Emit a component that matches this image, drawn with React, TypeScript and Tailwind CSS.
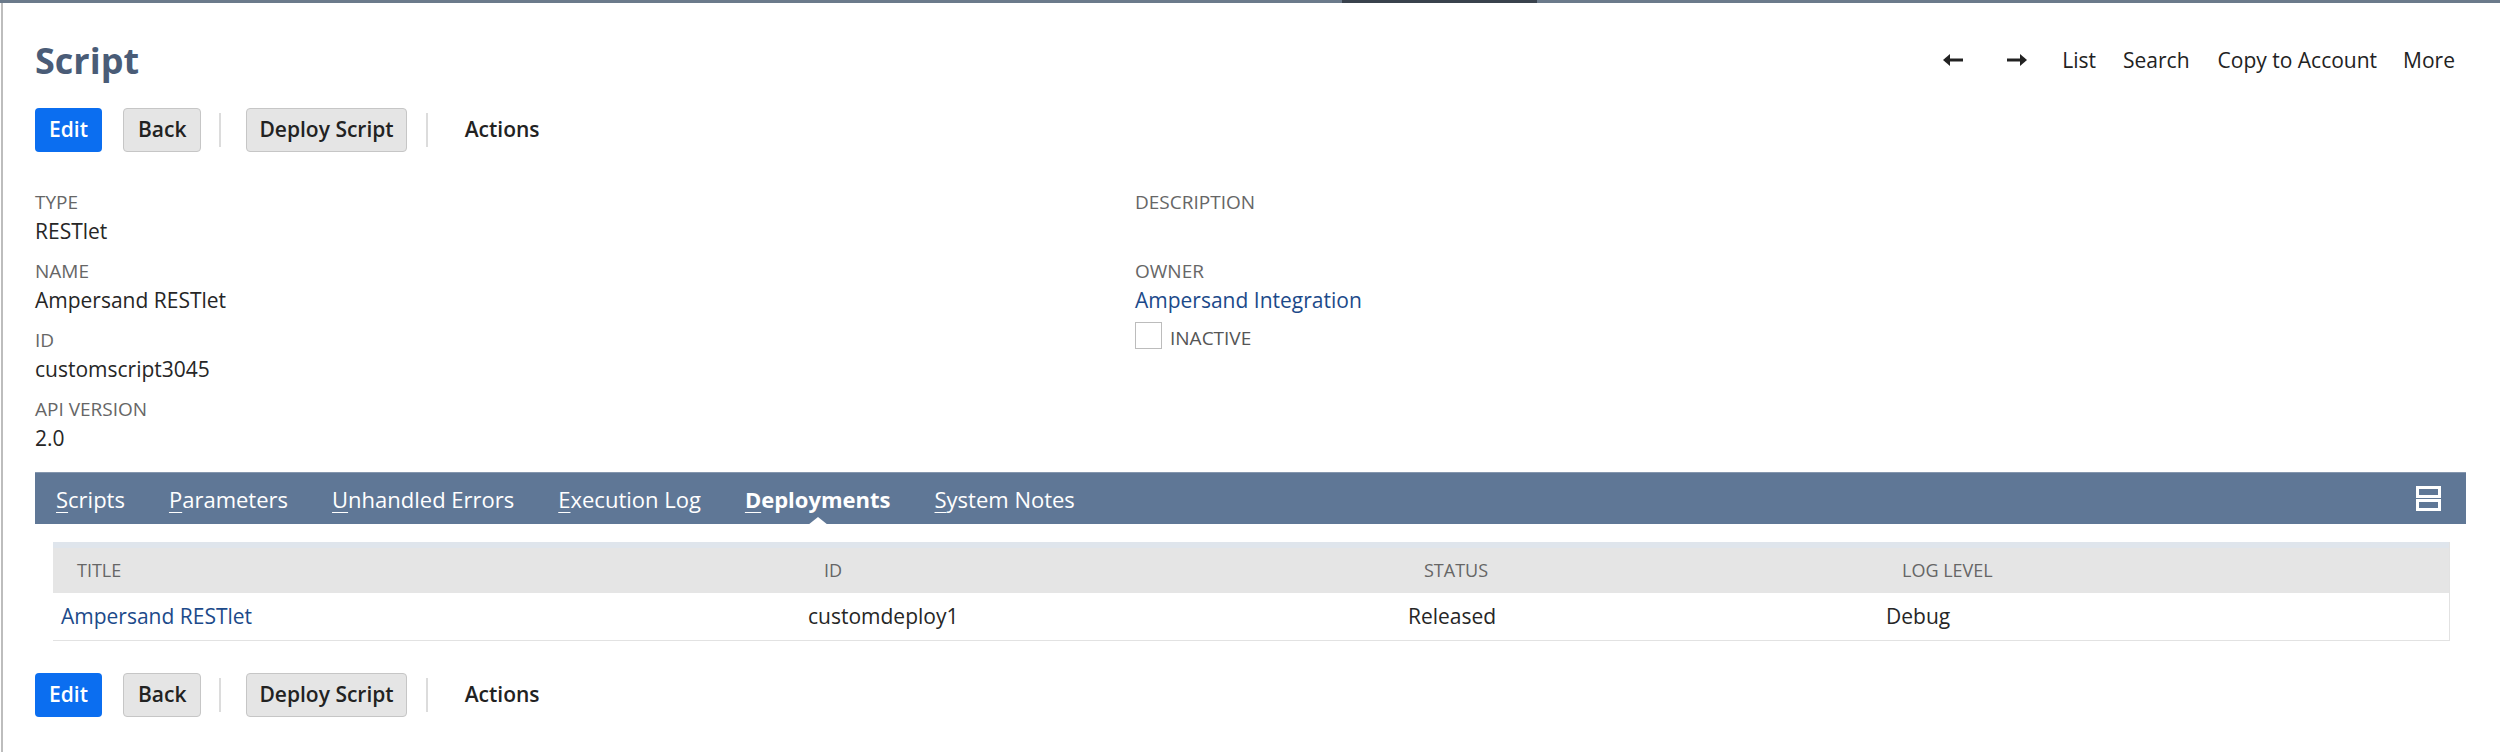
import React from "react"

const font = { fontFamily: '"Open Sans", "Liberation Sans", sans-serif' }

function ArrowLeft() {
  return (
    <svg width="23" height="16" viewBox="0 0 23 16" className="shrink-0">
      <path d="M22 8H4" stroke="#222" strokeWidth="3" />
      <path d="M9 2L2 8L9 14Z" fill="#222" />
    </svg>
  )
}

function ArrowRight() {
  return (
    <svg width="23" height="16" viewBox="0 0 23 16" className="shrink-0">
      <path d="M1 8H19" stroke="#222" strokeWidth="3" />
      <path d="M14 2L21 8L14 14Z" fill="#222" />
    </svg>
  )
}

function ButtonRow() {
  return (
    <div className="flex h-[44px] items-center">
      <button className="h-[44px] rounded-[4px] bg-[#0b6ef0] px-[14px] text-[21px] font-semibold text-white">Edit</button>
      <button className="ml-[21px] h-[44px] rounded-[4px] border border-[#c6c6c6] bg-[#e5e5e5] px-[14px] text-[21px] font-semibold text-[#222]">
        Back
      </button>
      <div className="ml-[18px] h-[34px] w-[2px] bg-[#dcdcdc]" />
      <button className="ml-[25px] h-[44px] rounded-[4px] border border-[#c6c6c6] bg-[#e5e5e5] px-[12px] text-[21px] font-semibold text-[#222]">
        Deploy Script
      </button>
      <div className="ml-[19px] h-[34px] w-[2px] bg-[#dcdcdc]" />
      <span className="ml-[37px] text-[21px] font-semibold text-[#222]">Actions</span>
    </div>
  )
}

function Field({ label, value, link }: { label: string; value?: string; link?: boolean }) {
  return (
    <div className="mb-[11px]">
      <div className="h-[26px] text-[19px] leading-[26px] text-[#666]">{label}</div>
      <div className={`h-[32px] text-[21px] leading-[32px] ${link ? "text-[#1c4a8a]" : "text-[#262626]"}`}>{value}</div>
    </div>
  )
}

const tabs = [
  { k: "S", rest: "cripts" },
  { k: "P", rest: "arameters" },
  { k: "U", rest: "nhandled Errors" },
  { k: "E", rest: "xecution Log" },
  { k: "D", rest: "eployments", active: true },
  { k: "S", rest: "ystem Notes" },
]

export default function App() {
  return (
    <div style={font} className="relative h-[752px] w-[2500px] overflow-hidden bg-white">
      <div className="flex h-[3px]">
        <div className="w-[1342px] bg-[#6b7a8b]" />
        <div className="w-[195px] bg-[#39424d]" />
        <div className="flex-1 bg-[#6b7a8b]" />
      </div>
      <div className="flex h-[749px]">
        <div className="w-[3px] border-r-2 border-[#bdbdbd]" />
        <div className="flex-1 pl-[32px] pr-[34px]">
          <div className="flex h-[84px] items-end justify-between pb-[2px]">
            <h1 className="text-[36px] font-bold leading-[48px] text-[#4a5c77]">Script</h1>
            <div className="mr-[11px] flex items-center pb-[9px] text-[21px] text-[#222]">
              <span className="mr-[4px]"><ArrowLeft /></span>
              <span className="ml-[38px]"><ArrowRight /></span>
              <span className="ml-[33px]">List</span>
              <span className="ml-[27px]">Search</span>
              <span className="ml-[28px]">Copy to Account</span>
              <span className="ml-[26px]">More</span>
            </div>
          </div>
          <div className="mt-[21px]">
            <ButtonRow />
          </div>

          <div className="mt-[37px] flex">
            <div className="w-[1100px]">
              <Field label="TYPE" value="RESTlet" />
              <Field label="NAME" value="Ampersand RESTlet" />
              <Field label="ID" value="customscript3045" />
              <Field label="API VERSION" value="2.0" />
            </div>
            <div>
              <Field label="DESCRIPTION" />
              <div>
                <div className="h-[26px] text-[19px] leading-[26px] text-[#666]">OWNER</div>
                <div className="h-[32px] text-[21px] leading-[32px] text-[#1c4a8a]">Ampersand Integration</div>
              </div>
              <div className="mt-[6px] flex items-end">
                <div className="h-[27px] w-[27px] border border-[#bcbcbc] bg-white" />
                <span className="ml-[8px] text-[19px] leading-[22px] text-[#555]">INACTIVE</span>
              </div>
            </div>
          </div>

          <div className="mt-[7px] flex h-[52px] items-center border-t border-[#8496ae] bg-[#5f7796] pl-[21px] pr-[25px]">
            <div className="flex flex-1 items-center gap-[44px]">
              {tabs.map((t) => (
                <div key={t.rest} className={`relative text-[22px] leading-[52px] text-white ${t.active ? "font-bold" : ""}`}>
                  <span className="underline decoration-1 underline-offset-[4px]">{t.k}</span>
                  {t.rest}
                  {t.active ? (
                    <div className="absolute bottom-0 left-1/2 h-0 w-0 -translate-x-1/2 border-x-[10px] border-b-[8px] border-x-transparent border-b-white" />
                  ) : null}
                </div>
              ))}
            </div>
            <svg width="25" height="25" viewBox="0 0 25 25">
              <rect x="1.5" y="1.5" width="22" height="9" fill="#5f7796" stroke="white" strokeWidth="3" />
              <rect x="1.5" y="14.5" width="22" height="9" fill="#5f7796" stroke="white" strokeWidth="3" />
            </svg>
          </div>

          <div className="ml-[18px] mr-[16px] mt-[18px] border-b border-r border-[#e2e2e2]">
            <div className="h-[6px] bg-[#dfe5ec]" />
            <div className="flex h-[45px] items-center bg-[#e5e5e5] text-[18px] text-[#666]">
              <div className="w-[747px] pl-[24px]">TITLE</div>
              <div className="w-[600px] pl-[24px]">ID</div>
              <div className="w-[478px] pl-[24px]">STATUS</div>
              <div className="pl-[24px]">LOG LEVEL</div>
            </div>
            <div className="flex h-[47px] items-center bg-white text-[21px] text-[#262626]">
              <div className="w-[747px] pl-[8px] text-[#1c4a8a]">Ampersand RESTlet</div>
              <div className="w-[600px] pl-[8px]">customdeploy1</div>
              <div className="w-[478px] pl-[8px]">Released</div>
              <div className="pl-[8px]">Debug</div>
            </div>
          </div>

          <div className="mt-[32px]">
            <ButtonRow />
          </div>
        </div>
      </div>
    </div>
  )
}
